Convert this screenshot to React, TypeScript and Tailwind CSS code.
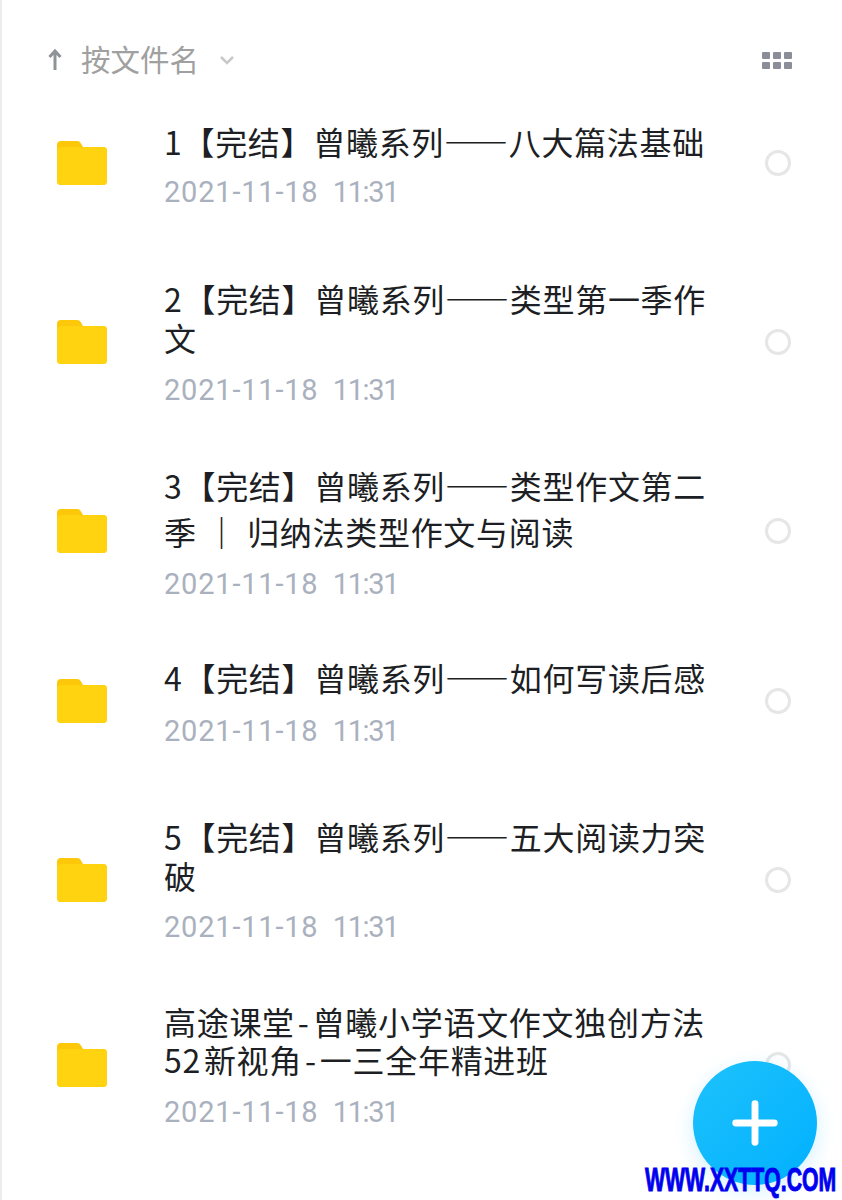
import { Plus } from 'lucide-react';

type FileRow = {
    lines: string[];
    spacing: string;
    leading: string;
    dateGap: string;
    shift: string;
};

const rows: FileRow[] = [
    { lines: ['1【完结】曾曦系列——八大篇法基础'], spacing: 'mt-[42px]', leading: 'leading-[39px]', dateGap: 'mt-[12px]', shift: 'mb-[8px]' },
    { lines: ['2【完结】曾曦系列——类型第一季作', '文'], spacing: 'mt-[67px]', leading: 'leading-[39px]', dateGap: 'mt-[14px]', shift: 'mb-[6px]' },
    { lines: ['3【完结】曾曦系列——类型作文第二', '季 ｜ 归纳法类型作文与阅读'], spacing: 'mt-[52px]', leading: 'leading-[46px]', dateGap: 'mt-[11px]', shift: 'mb-[4px]' },
    { lines: ['4【完结】曾曦系列——如何写读后感'], spacing: 'mt-[54px]', leading: 'leading-[39px]', dateGap: 'mt-[15px]', shift: 'mb-[7px]' },
    { lines: ['5【完结】曾曦系列——五大阅读力突', '破'], spacing: 'mt-[66px]', leading: 'leading-[39px]', dateGap: 'mt-[13px]', shift: 'mb-[5px]' },
    { lines: ['高途课堂-曾曦小学语文作文独创方法', '52新视角-一三全年精进班'], spacing: 'mt-[55px]', leading: 'leading-[38px]', dateGap: 'mt-[15px]', shift: 'mb-[4px]' },
];

// dashes, hyphens and digits sit wider in the picture than the font's default glyphs
function TitleLine({ text }: { text: string }) {
    const parts = text.split(/(——|-|｜|^52|^[2-5])/);
    return (
        <>
            {parts.map((part, i) => {
                if (part === '——') {
                    return <span key={i} className="font-medium [font-feature-settings:'fwid']">{part}</span>;
                }
                if (part === '-') {
                    return <span key={i} className="mx-[3px]">{part}</span>;
                }
                if (part === '｜') {
                    return <span key={i} className="mx-px font-bold">{part}</span>;
                }
                if (part === '52') {
                    return <span key={i} className="mr-[3px]">{part}</span>;
                }
                if (/^[2-5]$/.test(part)) {
                    return <span key={i} className="mr-px">{part}</span>;
                }
                return <span key={i}>{part}</span>;
            })}
        </>
    );
}

function FolderIcon({ className }: { className: string }) {
    return (
        <svg width="50" height="44" viewBox="0 0 50 44" className={`shrink-0 ${className}`}>
            <path d="M0 4a4 4 0 0 1 4-4h16c2 0 3 1 4 2.500l2 3.500H46a4 4 0 0 1 4 4v30a4 4 0 0 1-4 4H4a4 4 0 0 1-4-4z" fill="#fdc70a" />
            <path d="M0 10a4 4 0 0 1 4-4h42a4 4 0 0 1 4 4v30a4 4 0 0 1-4 4H4a4 4 0 0 1-4-4z" fill="#ffd30f" />
        </svg>
    );
}

function GridIcon() {
    return (
        <div className="grid grid-cols-3 gap-x-[3px] gap-y-[3px]">
            {[0, 1, 2, 3, 4, 5].map((i) => (
                <span key={i} className="h-[7px] w-[8px] rounded-[1px] bg-[#8b8e99]" />
            ))}
        </div>
    );
}

export default function App() {
    return (
        <div className="relative h-[1200px] w-[842px] overflow-hidden border-l-2 border-[#ececec] bg-white font-['Noto_Sans_CJK_SC',sans-serif]">
            <div className="mt-[40px] flex h-[40px] items-center pl-[44px] pr-[50px]">
                <svg width="18" height="24" viewBox="0 0 18 24" className="shrink-0">
                    <path d="M9 3v19M3.500 9 9 3l5.500 6" fill="none" stroke="#8f9296" strokeWidth="3" />
                </svg>
                <span className="mb-[4px] ml-[17px] text-[29.5px] leading-[40px] text-[#a0a0a0]">按文件名</span>
                <svg width="16" height="10" viewBox="0 0 16 10" className="ml-[20px]">
                    <path d="M2 2l6 6 6-6" fill="none" stroke="#c8c8c8" strokeWidth="2.500" />
                </svg>
                <div className="ml-auto">
                    <GridIcon />
                </div>
            </div>

            {rows.map((row, i) => (
                <div key={i} className={`flex items-center pl-[55px] pr-[51px] ${row.spacing}`}>
                    <FolderIcon className={row.shift} />
                    <div className="ml-[58px] w-[560px]">
                        {row.lines.map((line) => (
                            <div key={line} className={`-ml-px whitespace-nowrap text-[32px] tracking-[0.7px] text-[#1d1f24] ${row.leading}`}>
                                <TitleLine text={line} />
                            </div>
                        ))}
                        <div className={`-ml-px whitespace-pre font-['Roboto',sans-serif] text-[29px] leading-[39px] text-[#aab1be] ${row.dateGap}`}>
                            <span className="tracking-[0.8px]">2021-11-18</span>
                            <span>  </span>
                            <span className="tracking-[-1.4px]">11:31</span>
                        </div>
                    </div>
                    <span className={`ml-auto h-[26px] w-[26px] rounded-full border-[3px] border-[#e6e6e6] ${row.shift}`} />
                </div>
            ))}

            <div className="absolute left-[691px] top-[1061px] flex h-[124px] w-[124px] items-center justify-center rounded-full bg-gradient-to-br from-[#1cc2fb] to-[#00b0ff] shadow-[0_6px_20px_rgba(0,176,255,0.18)]">
                <Plus size={66} color="white" strokeWidth={2.5} />
            </div>
            <div className="absolute left-[643px] top-[1163px] origin-left scale-x-[0.644] whitespace-nowrap font-['Liberation_Sans',sans-serif] text-[33px] font-black leading-[34px] text-[#0000f0] [-webkit-text-stroke:1px_#0000f0]">
                WWW.XXTTQ.COM
            </div>
        </div>
    );
}
